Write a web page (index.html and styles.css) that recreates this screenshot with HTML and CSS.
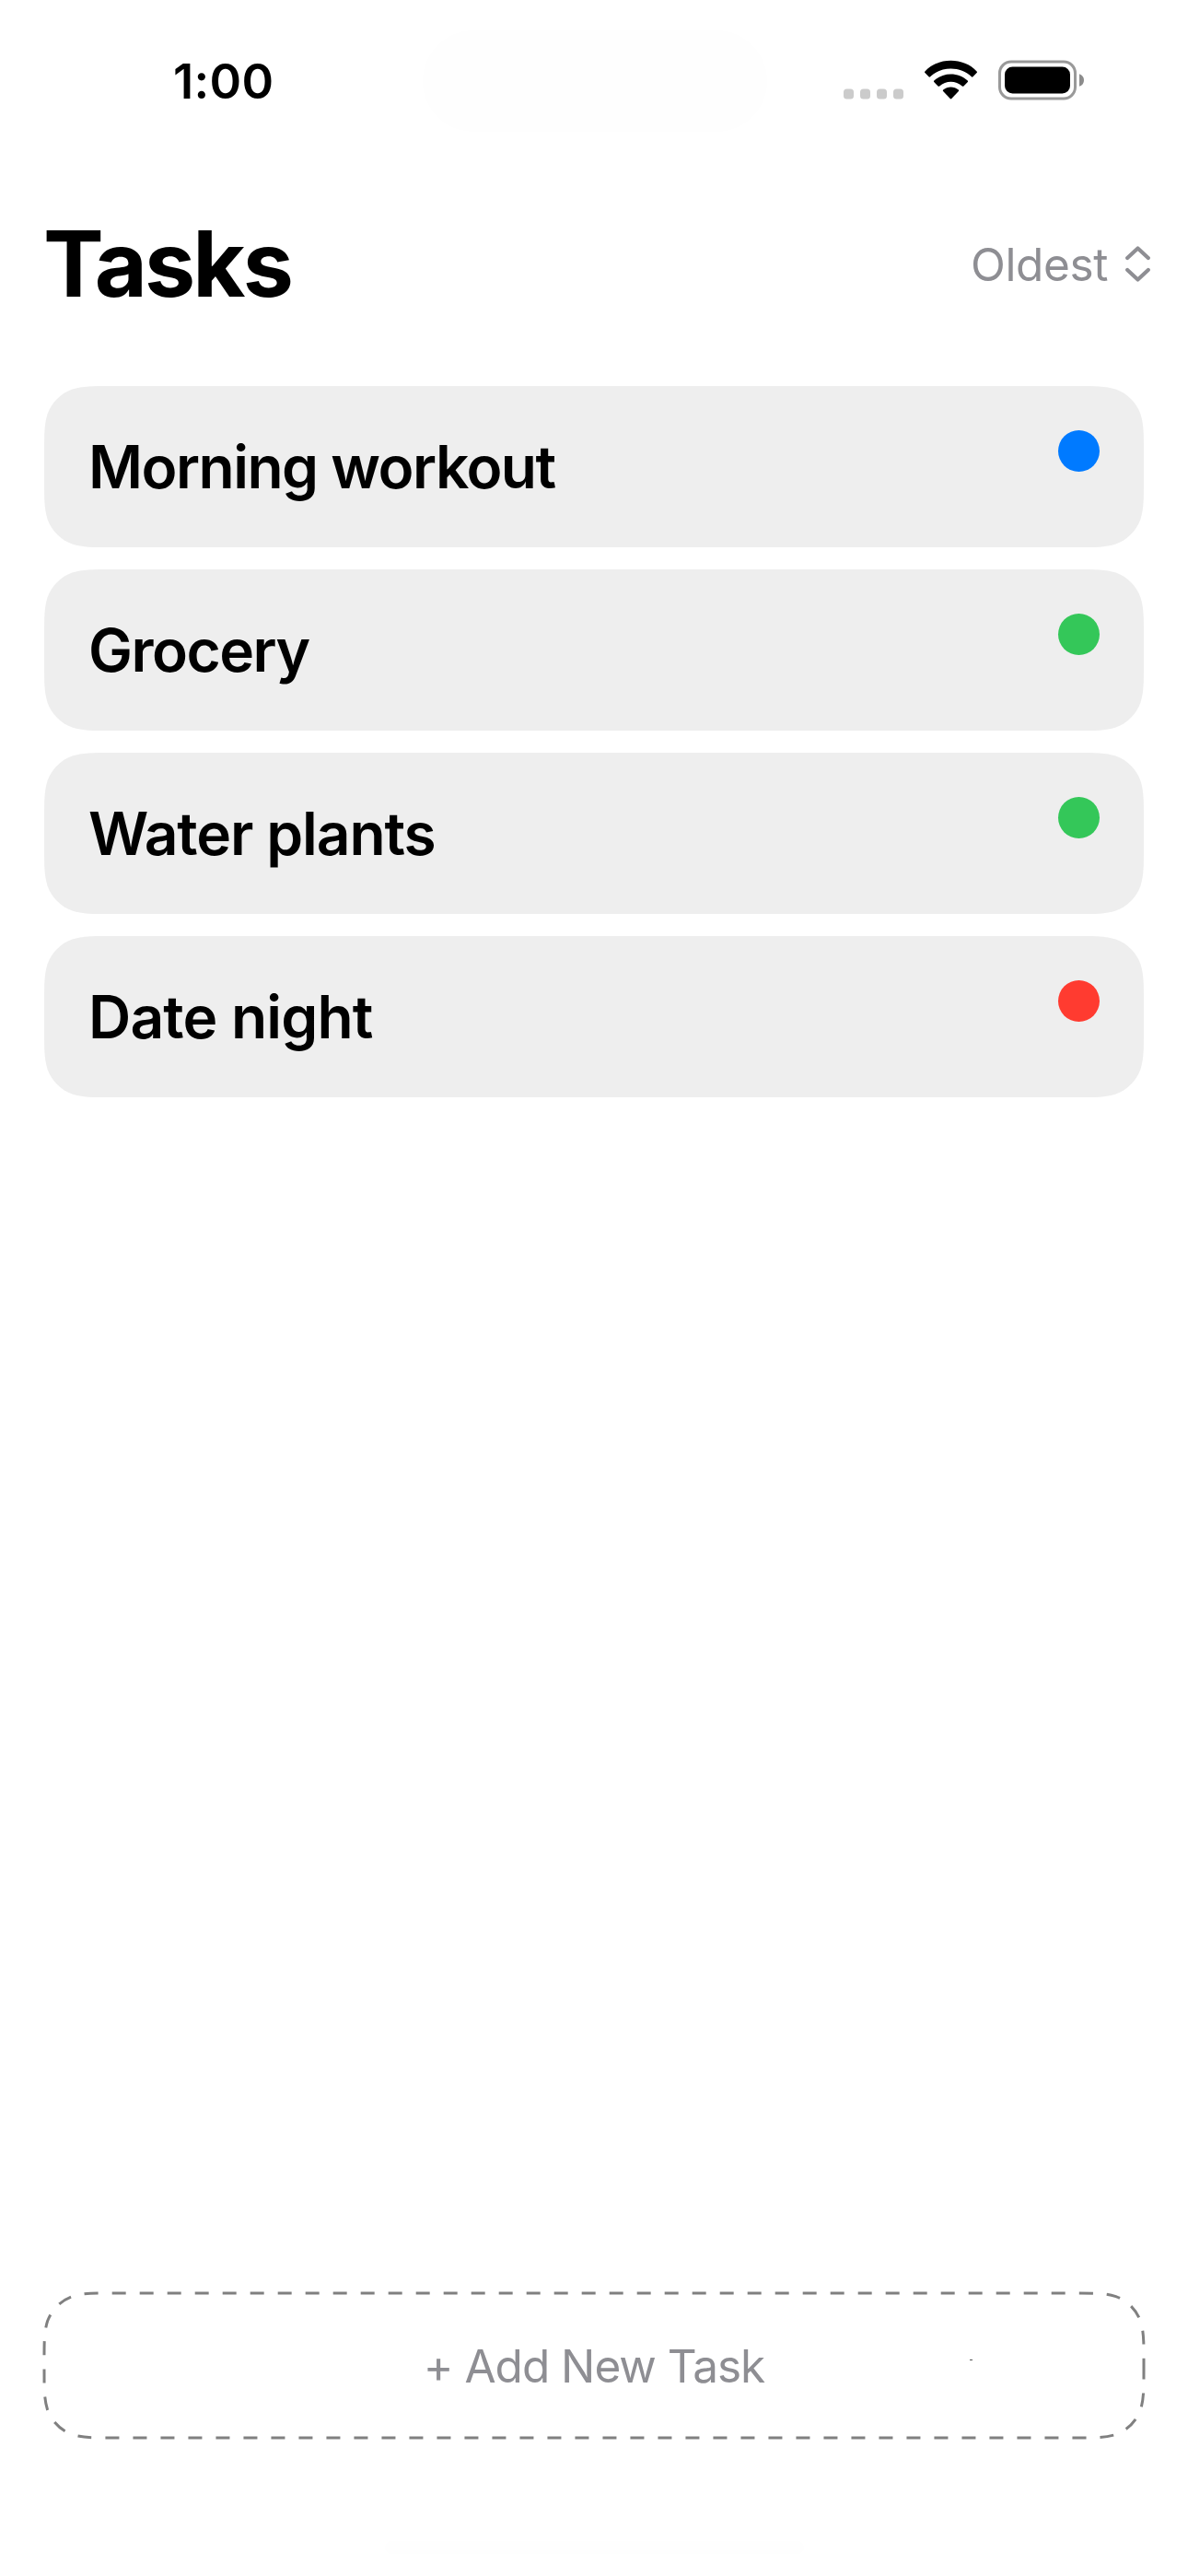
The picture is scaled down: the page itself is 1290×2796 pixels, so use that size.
FILE: index.html
```html
<!DOCTYPE html>
<html lang="en">
<head>
<meta charset="utf-8">
<title>Tasks</title>
<link rel="stylesheet" href="styles.css">
</head>
<body>
<div class="screen">
  <div class="status">
    <span class="time">1:00</span>
    <i class="island"></i>
    <svg class="indicators" width="262" height="44" viewBox="916 64.5 262 44">
      <g fill="#cbcbcb">
        <rect x="916" y="96" width="11" height="11" rx="3.5"/>
        <rect x="934" y="96" width="11" height="11" rx="3.5"/>
        <rect x="952" y="96" width="11" height="11" rx="3.5"/>
        <rect x="970" y="96" width="11" height="11" rx="3.5"/>
      </g>
      <path d="M1004.4 78.6Q1003.6 77.8 1004.4 77C1018.5 61.3 1046.500 61.3 1060.600 77Q1061.400 77.800 1060.600 78.600L1056.500 82.800Q1055.700 83.500 1054.900 82.800C1043.500 71 1021.500 71 1010.100 82.800Q1009.300 83.500 1008.500 82.800Z"/>
      <path d="M1014.200 88.600Q1013.500 87.800 1014.300 87C1024 77.500 1041 77.500 1050.700 87Q1051.500 87.800 1050.800 88.600L1046.400 93Q1045.600 93.700 1044.800 93C1038 86.600 1027 86.600 1020.200 93Q1019.400 93.700 1018.600 93Z"/>
      <path d="M1024.100 98.500Q1023.400 97.700 1024.200 97C1029 92.900 1036 92.900 1040.800 97Q1041.600 97.700 1040.900 98.500L1033.300 106.500Q1032.500 107.300 1031.700 106.500Z"/>
      <rect x="1085.500" y="66.500" width="82" height="40" rx="12.500" fill="none" stroke="#999" stroke-width="3"/>
      <rect x="1091" y="72" width="71" height="29" rx="8.500"/>
      <path d="M1172 79.700Q1177 81.600 1177 86.500Q1177 91.400 1172 93.300Z" fill="#8c8c8c"/>
    </svg>
  </div>
  <header class="header">
    <h1 class="title">Tasks</h1>
    <div class="sort">
      <span class="sort-label">Oldest</span>
      <svg class="chevrons" width="27" height="39" viewBox="0 0 27 39">
        <path d="M2.200 13L13.500 2.500L24.800 13M2.200 26L13.500 36.500L24.800 26"/>
      </svg>
    </div>
  </header>
  <main class="list">
    <div class="card"><span class="name name-tight">Morning workout</span><i class="dot blue"></i></div>
    <div class="card"><span class="name name-tight">Grocery</span><i class="dot green"></i></div>
    <div class="card"><span class="name">Water plants</span><i class="dot green"></i></div>
    <div class="card"><span class="name name-loose">Date night</span><i class="dot red"></i></div>
  </main>
  <div class="add">
    <svg class="outline" width="1198" height="161" viewBox="-2 -2 1198 161">
      <path class="dashes" d="M1194 78.500V83.624C1194 104.752 1194 115.316 1190.404 126.688C1185.885 139.104 1176.104 148.885 1163.688 153.404C1152.316 157 1141.752 157 1120.624 157H73.376C52.248 157 41.684 157 30.312 153.404C17.896 148.885 8.115 139.104 3.596 126.688C0 115.316 0 104.752 0 83.624V73.376C0 52.248 0 41.684 3.596 30.312C8.115 17.896 17.896 8.115 30.312 3.596C41.684 0 52.248 0 73.376 0H1120.624C1141.752 0 1152.316 0 1163.688 3.596C1176.104 8.115 1185.885 17.896 1190.404 30.312C1194 41.684 1194 52.248 1194 73.376Z"/>
      <rect x="1005" y="72" width="3" height="1" fill="#555"/>
    </svg>
    <span class="add-label">+ Add New Task</span>
  </div>
  <i class="home"></i>
</div>
</body>
</html>
```
FILE: styles.css
```css
* { box-sizing: border-box; }
body { margin: 0; background: #fff; color: #000; font-family: Inter, "Liberation Sans", sans-serif; }
.screen { width: 1290px; height: 2796px; display: flex; flex-direction: column; overflow: hidden; }
.status { position: relative; height: 177px; padding: 0 112px 4px 188px; display: flex; align-items: center; justify-content: space-between; }
.island { position: absolute; left: 459px; top: 33px; width: 374px; height: 110px; border-radius: 55px; background: #fefefe; }
.indicators { display: block; }
.time { font-size: 52.500px; line-height: 60px; font-weight: 600; letter-spacing: 0.300px; padding-top: 2px; }
.header { height: 218px; padding: 0 41px 0 47px; display: flex; align-items: center; justify-content: space-between; }
.title { margin: 0; font-size: 98.600px; line-height: 120px; font-weight: 700; letter-spacing: -2.900px; }
.sort { display: flex; align-items: center; gap: 19px; color: #8e8e93; }
.sort-label { font-size: 49.500px; line-height: 60px; letter-spacing: -0.400px; padding-top: 1px; }
.chevrons { display: block; fill: none; stroke: #8e8e93; stroke-width: 4.200px; stroke-linecap: round; stroke-linejoin: round; }
.list { display: flex; flex-direction: column; gap: 24px; padding: 24px 48px 0; }
.card {
  height: 175px;
  padding: 48px;
  display: flex;
  justify-content: space-between;
  align-items: flex-start;
  background: #eee;
  clip-path: path("M73.376 0H1120.624C1141.752 0 1152.316 0 1163.688 3.596C1176.104 8.115 1185.885 17.896 1190.404 30.312C1194 41.684 1194 52.248 1194 73.376V101.624C1194 122.752 1194 133.316 1190.404 144.688C1185.885 157.104 1176.104 166.885 1163.688 171.404C1152.316 175 1141.752 175 1120.624 175H73.376C52.248 175 41.684 175 30.312 171.404C17.896 166.885 8.115 157.104 3.596 144.688C0 133.316 0 122.752 0 101.624V73.376C0 52.248 0 41.684 3.596 30.312C8.115 17.896 17.896 8.115 30.312 3.596C41.684 0 52.248 0 73.376 0Z");
}
.name { font-size: 64px; line-height: 79px; font-weight: 600; letter-spacing: -1.100px; white-space: nowrap; }
.name-tight { letter-spacing: -1.500px; }
.name-loose { letter-spacing: -0.800px; }
.dot { width: 45px; height: 45px; border-radius: 50%; }
.blue { background: #007aff; }
.green { background: #34c759; }
.red { background: #ff3b30; }
.add { position: relative; margin: auto 48px 112px; height: 157px; flex-shrink: 0; display: flex; align-items: center; justify-content: center; }
.outline { position: absolute; left: -2px; top: -2px; }
.dashes { fill: none; stroke: #808080; stroke-width: 3px; stroke-dasharray: 15 15; }
.add-label { font-size: 49.500px; line-height: 60px; letter-spacing: -1px; color: #8e8e93; }
.home { align-self: center; width: 455px; height: 14px; margin-bottom: 24px; border-radius: 7px; background: #fefefe; }
```
